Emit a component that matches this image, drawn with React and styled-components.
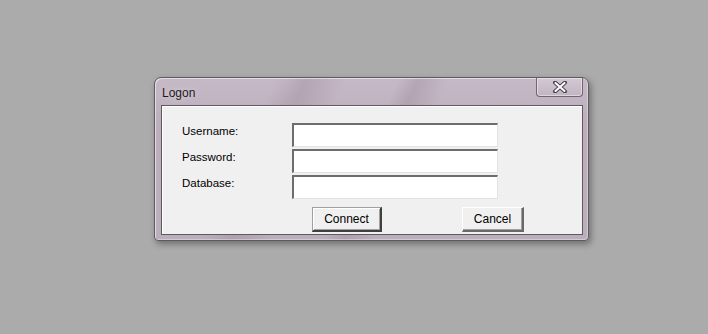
import styled, { createGlobalStyle } from "styled-components";

const GlobalStyle = createGlobalStyle`
  html, body {
    margin: 0;
    padding: 0;
    background: #ababab;
  }
  body {
    font-family: "Liberation Sans", Arial, sans-serif;
  }
`;

const Desktop = styled.div`
  width: 708px;
  height: 334px;
  padding: 77px 0 0 154px;
  box-sizing: border-box;
  background: #ababab;
`;

const Window = styled.div`
  width: 435px;
  height: 164px;
  box-sizing: border-box;
  display: flex;
  flex-direction: column;
  border: 1px solid #5f5a60;
  border-radius: 7px 7px 4px 4px;
  background:
    linear-gradient(115deg, transparent 0 24%, rgba(150, 130, 150, 0.35) 30%, transparent 38%, transparent 48%, rgba(150, 130, 150, 0.35) 52%, transparent 58%),
    linear-gradient(180deg, #c6b9c6 0%, #bcaebd 30%, #bcafbd 100%);
  box-shadow:
    inset 1px 1px 0 rgba(255, 255, 255, 0.55),
    inset -1px -1px 0 rgba(255, 255, 255, 0.35),
    2px 3px 6px rgba(0, 0, 0, 0.35);
`;

const TitleBar = styled.div`
  height: 27px;
  display: flex;
  align-items: flex-start;
  justify-content: space-between;
  padding: 0 5px 0 7px;
`;

const Title = styled.span`
  font-size: 12px;
  color: #1a1a1a;
  margin-top: 8px;
  text-shadow: 0 0 6px rgba(255, 255, 255, 0.6);
`;

const CloseButton = styled.div`
  width: 47px;
  height: 19px;
  box-sizing: border-box;
  border: 1px solid #6f6670;
  border-top: none;
  border-radius: 0 0 4px 4px;
  background: linear-gradient(180deg, #d2c8d2, #c2b5c3);
  box-shadow: inset 0 0 0 1px rgba(255, 255, 255, 0.45);
  display: flex;
  align-items: center;
  justify-content: center;
`;

const Client = styled.div`
  flex: 1;
  margin: 0 5px 5px 6px;
  background: #f0f0f0;
  border: 1px solid #5e5a5e;
  box-shadow: inset 1px 1px 0 #ffffff;
  display: flex;
  flex-direction: column;
  padding: 17px 0 0 20px;
`;

const Form = styled.div`
  display: grid;
  grid-template-columns: 110px 206px;
  grid-auto-rows: 24px;
  row-gap: 2px;
`;

const Label = styled.label`
  font-size: 11.5px;
  color: #000;
  align-self: start;
  margin-top: 2px;
`;

const Input = styled.input`
  width: 100%;
  height: 24px;
  box-sizing: border-box;
  margin: 0;
  background: #fff;
  border-style: solid;
  border-width: 2px 1px 1px 2px;
  border-color: #6d6d6d #e3e3e3 #e3e3e3 #6d6d6d;
  outline: none;
`;

const Buttons = styled.div`
  display: flex;
  margin-top: 8px;
  padding-left: 130px;
  gap: 80px;
`;

const Button = styled.button`
  width: ${(p) => p.$w}px;
  height: 25px;
  box-sizing: border-box;
  margin: 0;
  padding: 0;
  font-family: "Liberation Sans", Arial, sans-serif;
  font-size: 12px;
  color: #000;
  background: #f0f0f0;
  border-style: solid;
  border-width: 1px 2px 2px 1px;
  border-color: ${(p) =>
    p.$default ? "#a0a0a0 #404040 #404040 #a0a0a0" : "#ffffff #696969 #696969 #ffffff"};
  box-shadow: ${(p) =>
    p.$default ? "inset 1px 1px 0 #ffffff, inset -1px -1px 0 #a0a0a0" : "inset -1px -1px 0 #a0a0a0"};
`;

const CloseGlyph = () => (
  <svg width="16" height="12" viewBox="0 0 16 12">
    <path
      d="M3 1.5 L13 10.5 M13 1.5 L3 10.5"
      stroke="#4b4550"
      strokeWidth="4"
      strokeLinecap="round"
    />
    <path
      d="M3.5 2 L12.5 10 M12.5 2 L3.5 10"
      stroke="#ffffff"
      strokeWidth="2"
      strokeLinecap="round"
    />
  </svg>
);

export default function App() {
  return (
    <>
      <GlobalStyle />
      <Desktop>
        <Window>
          <TitleBar>
            <Title>Logon</Title>
            <CloseButton>
              <CloseGlyph />
            </CloseButton>
          </TitleBar>
          <Client>
            <Form>
              <Label>Username:</Label>
              <Input type="text" />
              <Label>Password:</Label>
              <Input type="password" />
              <Label>Database:</Label>
              <Input type="text" />
            </Form>
            <Buttons>
              <Button $w={70} $default>
                Connect
              </Button>
              <Button $w={62}>Cancel</Button>
            </Buttons>
          </Client>
        </Window>
      </Desktop>
    </>
  );
}
